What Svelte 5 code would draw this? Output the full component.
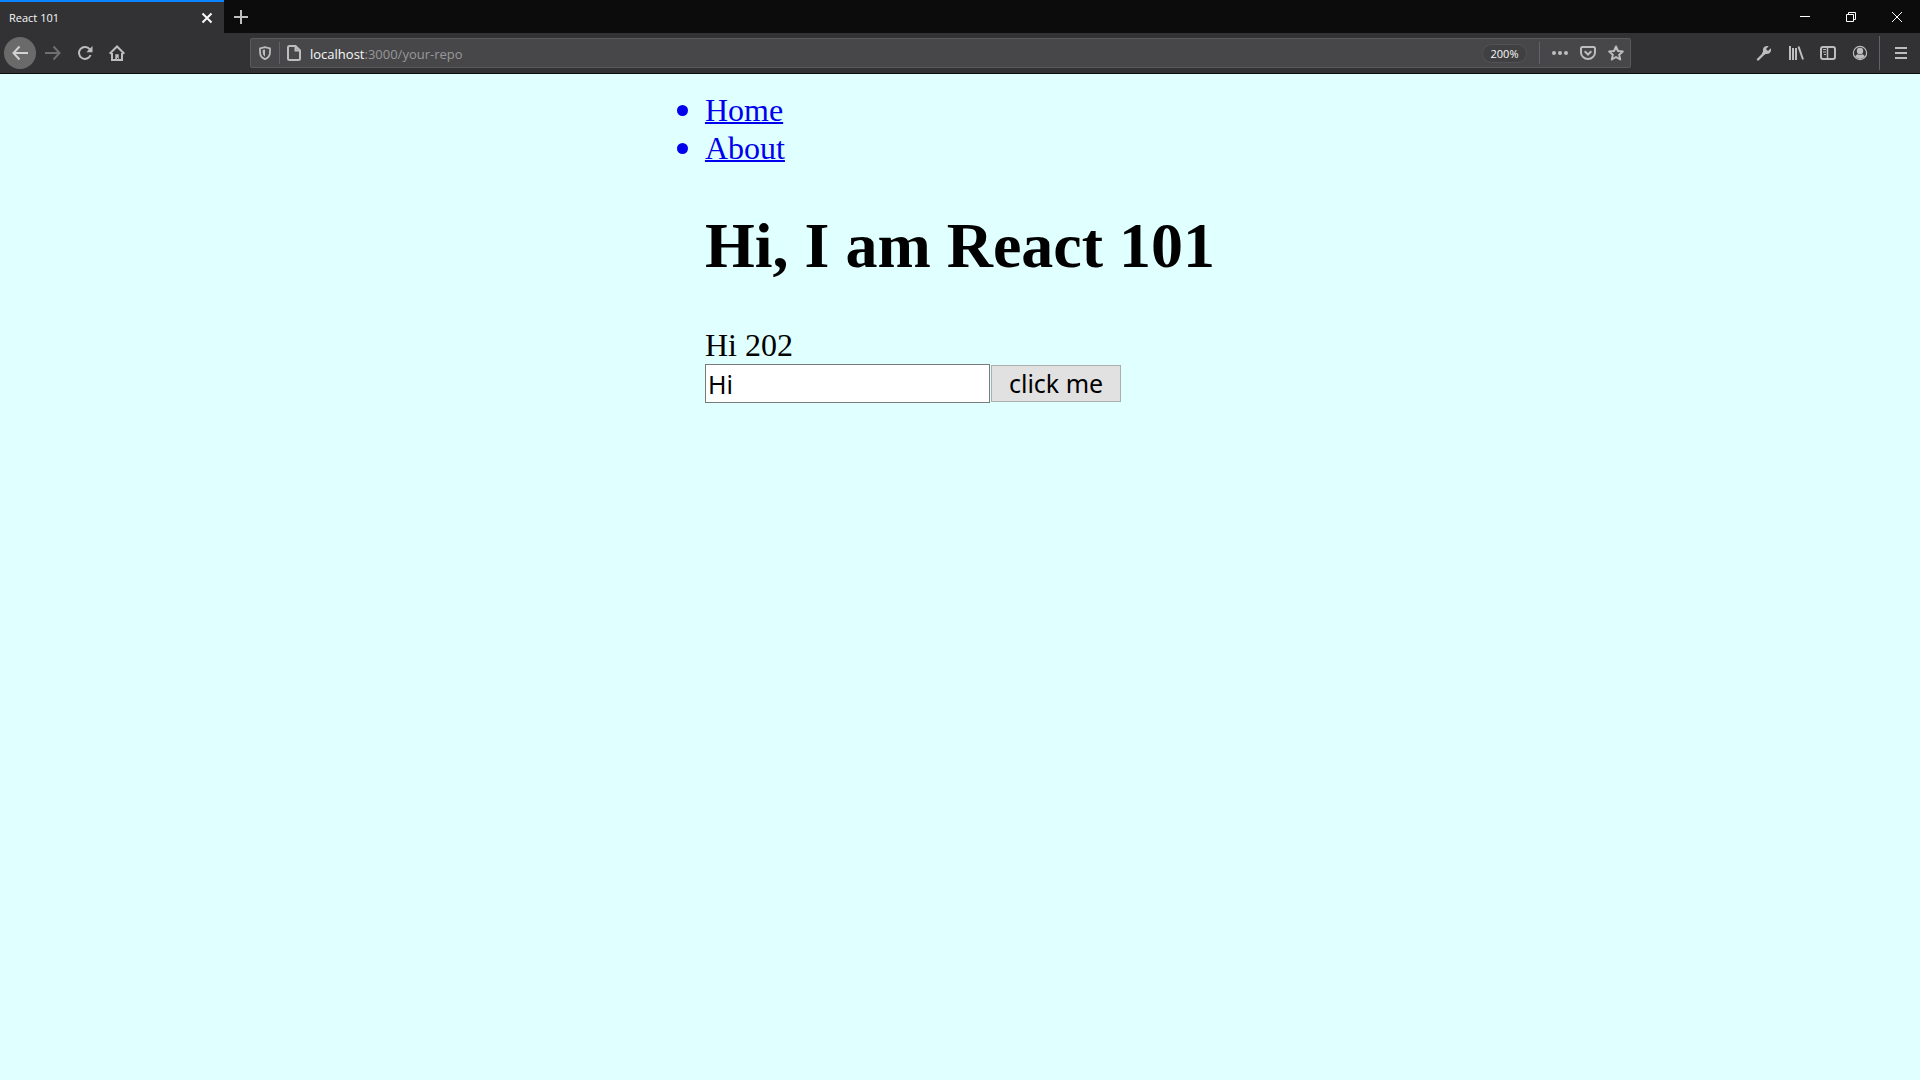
<script>
  let greeting = $state('Hi');
</script>

<div class="browser">
  <header>
    <div class="titlebar">
      <div class="tab">
        <span class="title">React 101</span>
        <button class="tab-close" aria-label="Close tab">
          <svg width="16" height="16" viewBox="0 0 16 16"><path d="M3.5 3.5l9 9M12.5 3.5l-9 9" stroke="#f9f9fa" stroke-width="2" /></svg>
        </button>
      </div>
      <button class="new-tab" aria-label="New tab">
        <svg width="16" height="16" viewBox="0 0 16 16"><path d="M8 1v14M1 8h14" stroke="#c0c0c2" stroke-width="2" /></svg>
      </button>
      <div class="window-controls">
        <button aria-label="Minimize"><svg width="10" height="10" viewBox="0 0 10 10"><path d="M0 4.5h10" stroke="#fff" /></svg></button>
        <button aria-label="Restore"><svg width="10" height="10" viewBox="0 0 10 10" fill="none"><path d="M.5 2.5h7v7h-7zM2.500 2.500v-2h7v7h-2" stroke="#fff" /></svg></button>
        <button aria-label="Close window"><svg width="10" height="10" viewBox="0 0 10 10"><path d="M0 0l10 10M10 0l-10 10" stroke="#fff" /></svg></button>
      </div>
    </div>

    <nav class="toolbar" aria-label="Browser">
      <button class="back" aria-label="Back">
        <svg class="icon" viewBox="0 0 16 16"><path d="M16 8H2M7.500 1.500L1.500 8l6 6.500" /></svg>
      </button>
      <button class="forward" aria-label="Forward" disabled>
        <svg class="icon" viewBox="0 0 16 16"><path d="M0 8h14M8.500 1.500l6 6.500-6 6.500" /></svg>
      </button>
      <button aria-label="Reload">
        <svg class="icon" viewBox="0 0 16 16"><path d="M12.800 4.300A6 6 0 1 0 13.600 10" /><path class="solid" d="M15.500 1v6.200H9.300z" /></svg>
      </button>
      <button aria-label="Home">
        <svg class="icon" viewBox="0 0 16 16"><path d="M.7 8.700L8 1.500l7.300 7.200M3 8v7h10V8" /><path class="solid" d="M6.300 15V9.300h3.400V15H8.900v-2.300h-.9V15z" /></svg>
      </button>

      <div class="urlbar">
        <button class="shield" aria-label="Tracking protection">
          <svg class="icon small" viewBox="0 0 16 16"><path d="M8 1.300L2.300 2.700V7c0 4 2.500 6.700 5.700 8 3.200-1.300 5.700-4 5.700-8V2.700z" /><path class="solid" d="M8 4v8c-1.700-1.200-2.600-2.900-2.600-5V4.700z" /></svg>
        </button>
        <span class="divider"></span>
        <button class="page-info" aria-label="Site information">
          <svg class="icon" viewBox="0 0 16 16"><path d="M3.500 1h6L14 5.500V13.500q0 1.500-1.500 1.500h-9Q2 15 2 13.500v-11Q2 1 3.500 1zM9.500 1v4.500H14" /></svg>
        </button>
        <a class="url" href="http://localhost:3000/your-repo"><span>localhost</span>:3000/your-repo</a>
        <button class="zoom">200%</button>
        <span class="divider"></span>
        <button class="action" aria-label="Page actions">
          <svg class="icon" viewBox="0 0 16 16"><g class="solid"><circle cx="2" cy="8" r="2" /><circle cx="8" cy="8" r="2" /><circle cx="14" cy="8" r="2" /></g></svg>
        </button>
        <button class="action" aria-label="Save to Pocket">
          <svg class="icon" viewBox="0 0 16 16"><path d="M2.500 2h11Q15 2 15 3.500V7.500a7 6.500 0 0 1-14 0V3.500Q1 2 2.500 2zM4.700 6.300L8 9.500l3.300-3.200" /></svg>
        </button>
        <button class="action" aria-label="Bookmark this page">
          <svg class="icon" viewBox="0 0 16 16"><path d="M8 1.500l2 4.500 4.800.5-3.600 3.200 1 4.800L8 12l-4.200 2.500 1-4.800L1.200 6.500 6 6z" stroke-linejoin="round" /></svg>
        </button>
      </div>

      <button aria-label="Developer tools">
        <svg class="icon" viewBox="0 0 16 16"><path d="M2 14.500l6-6" stroke-linecap="round" stroke-width="2.400" /><path class="solid" d="M14.700 3.300L12 6 10 4l2.700-2.700C10.500.4 7.500 1.500 7 4.200c-.2.800-.1 1.500.1 2.200L5.800 8.500 7.500 10.200l2.100-1.300c2.800.9 6.700-1.800 5.100-5.600z" /></svg>
      </button>
      <button aria-label="Library">
        <svg class="icon" viewBox="0 0 16 16"><path d="M2 1v14M5 3v12M8 3v12M10.500 1.500L15 14.500" /></svg>
      </button>
      <button aria-label="Sidebars">
        <svg class="icon" viewBox="0 0 16 16"><rect x="1" y="2" width="14" height="12" rx="2" /><path d="M7.500 2v12" stroke-width="1.500" /><path d="M3 4.500h3M3 7h3M4 9.500h2" stroke-width="1" /></svg>
      </button>
      <button aria-label="Account">
        <svg class="icon" viewBox="0 0 16 16"><circle cx="8" cy="8" r="6.600" stroke-width="1.200" /><circle class="solid" cx="8" cy="6" r="3.200" /><path class="solid" d="M3 11.200Q5 9 6 9.300q2 1 4 0 1-.3 3 1.900Q11 14 8 14t-5-2.800z" /></svg>
      </button>
      <span class="divider tall"></span>
      <button aria-label="Open menu">
        <svg class="icon" viewBox="0 0 16 16"><path d="M2 3h12M2 8h12M2 13h12" /></svg>
      </button>
    </nav>
  </header>

  <main>
    <div class="content">
      <ul>
        <li><a href="/">Home</a></li>
        <li><a href="/about">About</a></li>
      </ul>
      <h1>Hi, I am React 101</h1>
      <div>Hi 202</div>
      <div class="form">
        <input type="text" aria-label="Greeting" bind:value={greeting} />
        <button>click me</button>
      </div>
    </div>
  </main>
</div>

<style>
  :global(body) {
    margin: 0;
    background: #e0ffff;
  }

  button {
    padding: 0;
    border: 0;
    background: none;
  }

  header {
    font-family: 'Open Sans', 'Noto Sans', sans-serif;
    border-bottom: 1px solid #0c0c0d;
    background: #323234;
  }

  header button,
  .titlebar,
  .tab,
  .toolbar,
  .urlbar {
    display: flex;
    align-items: center;
  }

  header button {
    justify-content: center;
    flex: none;
  }

  .titlebar {
    height: 33px;
    background: #0c0c0d;
  }

  .tab {
    box-sizing: border-box;
    width: 224px;
    height: 100%;
    padding: 0 9px;
    border-top: 2px solid #0a84ff;
    background: #323234;
    color: #f9f9fa;
    font-size: 11px;
  }

  .title {
    flex: 1;
  }

  .tab-close {
    width: 16px;
  }

  .new-tab {
    width: 34px;
    height: 100%;
  }

  .window-controls {
    display: flex;
    height: 100%;
    margin-left: auto;
  }

  .window-controls button {
    width: 46px;
  }

  .toolbar {
    height: 40px;
    padding: 0 3px 0 4px;
  }

  .toolbar > button {
    width: 32px;
    height: 32px;
  }

  .icon {
    width: 16px;
    height: 16px;
    fill: none;
    stroke: #bdbdbe;
    stroke-width: 2;
  }

  .small {
    width: 14px;
    height: 14px;
  }

  .solid {
    fill: #bdbdbe;
    stroke: none;
  }

  .toolbar > .back {
    margin-right: 1px;
    border-radius: 50%;
    background: #6a6a6b;
  }

  .back .icon {
    stroke: #d2d2d3;
  }

  .forward .icon {
    stroke: #6f6f71;
  }

  .urlbar {
    box-sizing: border-box;
    flex: 1;
    height: 30px;
    margin: 0 117px;
    border: 1px solid #5a5a5c;
    border-radius: 2px;
    background: #474749;
    color: #98989a;
    font-size: 13px;
  }

  .shield,
  .page-info,
  .action {
    width: 28px;
    height: 28px;
  }

  .divider {
    width: 1px;
    height: 22px;
    background: #626266;
  }

  .tall {
    height: 34px;
    margin: 0 5px 0 3px;
  }

  .url {
    flex: 1;
    padding: 1px 0 0 2px;
    color: inherit;
    text-decoration: none;
  }

  .url span {
    color: #f9f9fa;
  }

  .zoom {
    box-sizing: border-box;
    width: 45px;
    height: 19px;
    margin-right: 12px;
    border: 1px solid #525254;
    border-radius: 10px;
    background: #404042;
    color: #f9f9fa;
    font-family: inherit;
    font-size: 11px;
  }

  .divider + .action {
    margin-left: 6px;
  }

  main {
    display: flex;
    justify-content: center;
    padding: 16px;
    color: #000;
    font-family: 'Liberation Serif', serif;
    font-size: 32px;
    line-height: 38px;
  }

  ul {
    margin: 0;
    padding: 0;
    color: #00e;
  }

  li {
    height: 38px;
  }

  li::marker {
    font-size: 36px;
  }

  li a {
    color: #00e;
    text-decoration-thickness: 2px;
  }

  h1 {
    margin: 43px 0;
    font-size: 64px;
    line-height: 74px;
  }

  .form {
    display: flex;
    align-items: center;
    gap: 1px;
  }

  .form input,
  .form button {
    box-sizing: border-box;
    color: #000;
    font-family: 'Noto Sans', 'Open Sans', sans-serif;
    font-size: 25px;
  }

  .form input {
    width: 285px;
    height: 39px;
    padding: 0 2px;
    border: 1px solid #7a7a7a;
    border-radius: 0;
    background: #fff;
  }

  .form button {
    height: 37px;
    padding: 0 17px;
    border: 1px solid #adadad;
    background: #e1e1e1;
    line-height: 35px;
  }
</style>
